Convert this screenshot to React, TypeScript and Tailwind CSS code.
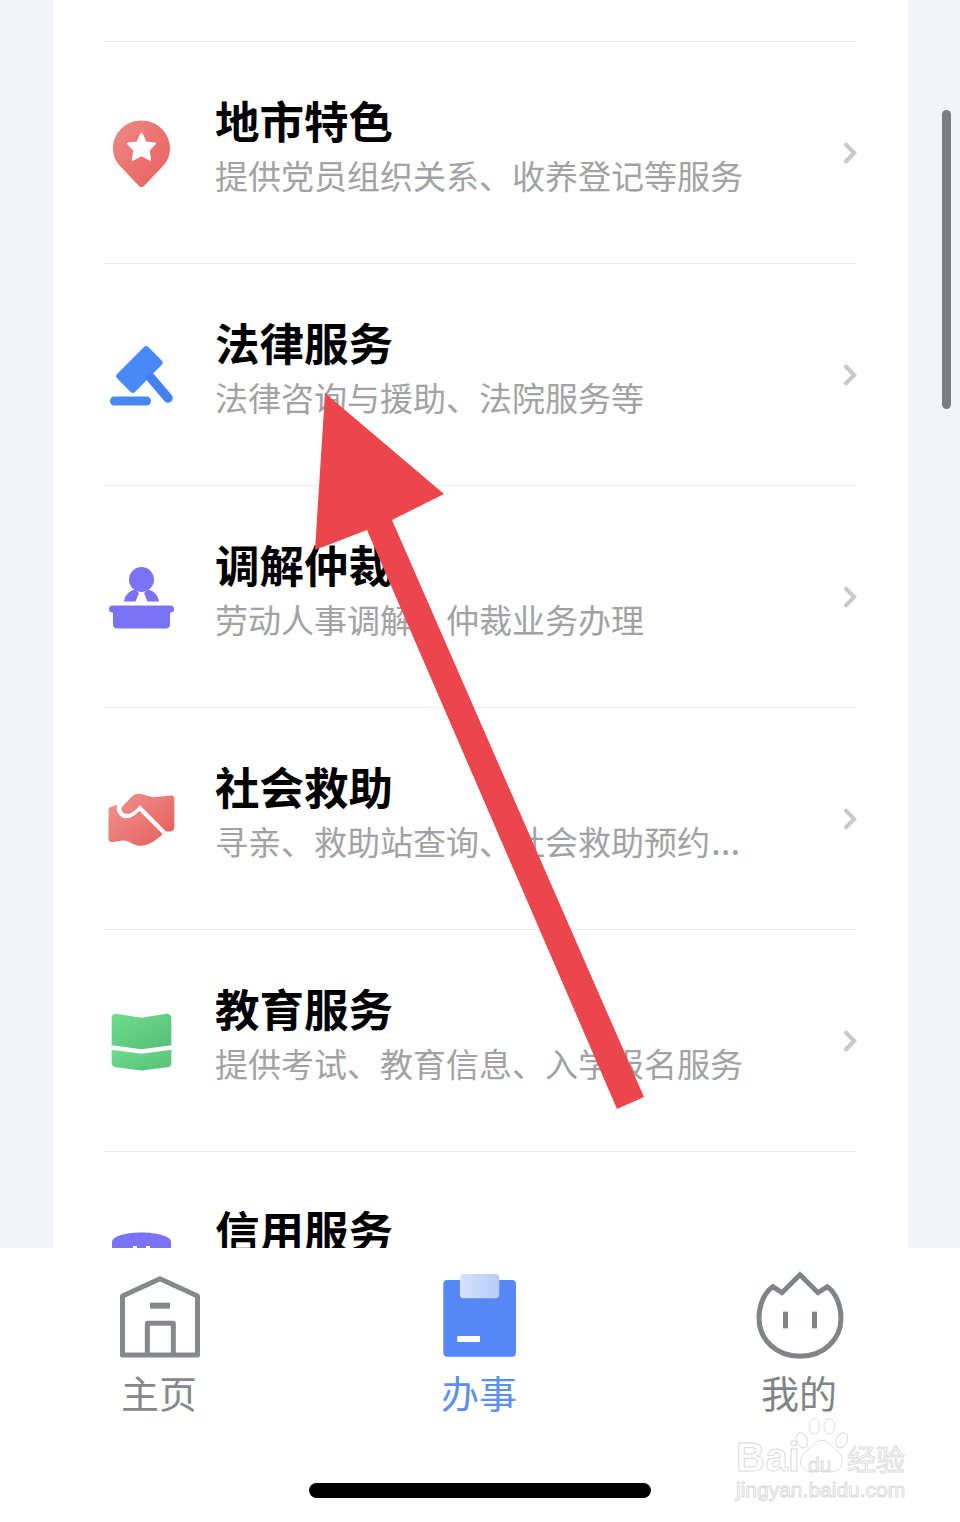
import React from "react";

const FONT = "font-['Noto_Sans','Noto_Sans_CJK_SC',sans-serif]";

function Pin() {
  return (
    <svg viewBox="0 0 70 70" className="w-[70px] h-[70px] shrink-0">
      <defs>
        <linearGradient id="pinG" x1="0" y1="0" x2="1" y2="1">
          <stop offset="0" stopColor="#ee8a87" />
          <stop offset="1" stopColor="#e85e5a" />
        </linearGradient>
      </defs>
      <path d="M35.5 2.5C51.5 2.5 64 15 64 30.5C64 38 61 44 56 49L38.5 67.5C36.8 69.5 34.2 69.5 32.5 67.5L15 49C10 44 7 38 7 30.5C7 15 19.5 2.5 35.5 2.5Z" fill="url(#pinG)" />
      <path d="M35.5 15.5L39.6 24.4L49 25.6L42.6 32.3L44.2 41.7L35.5 37.4L26.8 41.7L28.4 32.3L22 25.6L31.4 24.4Z" fill="#fff" stroke="#fff" strokeWidth="2" strokeLinejoin="round" />
    </svg>
  );
}

function Gavel() {
  return (
    <svg viewBox="0 0 70 70" className="w-[70px] h-[70px] shrink-0">
      <path d="M38 7C39.2 5.7 41 5.7 42.2 7L55.8 20.5C57.1 21.8 57.1 23.6 55.8 24.8L29 52C27.7 53.3 25.9 53.3 24.7 52L11 38.2C9.7 37 9.7 35.2 11 34Z" fill="#4689f7" />
      <path d="M45 38L62 58" stroke="#4280f4" strokeWidth="9.5" strokeLinecap="round" />
      <rect x="4" y="56.5" width="41" height="9" rx="4.5" fill="#4688f6" />
    </svg>
  );
}

function Person() {
  return (
    <svg viewBox="0 0 70 70" className="w-[70px] h-[70px] shrink-0">
      <circle cx="35.5" cy="17.5" r="12.5" fill="#7a73f5" />
      <path d="M18 39.5C19 33 23 29 29 27.5L33 31L29.5 39.5ZM53 39.5C52 33 48 29 42 27.5L38 31L41.5 39.5Z" fill="#7a73f5" />
      <rect x="3" y="43.5" width="65" height="7" rx="3.5" fill="#7a73f5" />
      <path d="M7 49H64V62.5C64 65 62.5 66.5 60 66.5H11C8.5 66.5 7 65 7 62.5Z" fill="#7a73f5" />
    </svg>
  );
}

function Hands() {
  return (
    <svg viewBox="0 0 70 70" className="w-[70px] h-[70px] shrink-0">
      <defs>
        <linearGradient id="hsG" x1="0" y1="0" x2="1" y2="1">
          <stop offset="0" stopColor="#ef8f8c" />
          <stop offset="1" stopColor="#e7625d" />
        </linearGradient>
      </defs>
      <g transform="translate(-16 -233.5) scale(.3333)" fill="url(#hsG)">
        <path d="M56 772L82 763C76 778 85 795 100 802C118 808 134 796 148 781L218 851C200 866 182 884 150 886C132 886 116 868 96 870L66 875C58 875 55 870 55 862Z" />
        <path d="M95 770L126 738C134 730 146 729 156 731L190 740L245 735C251 735 253 739 253 746V828C253 838 248 843 240 843H228L150 764C138 778 124 791 110 790C98 788 92 780 95 770Z" />
      </g>
    </svg>
  );
}

function Book() {
  return (
    <svg viewBox="0 0 70 70" className="w-[70px] h-[70px] shrink-0">
      <defs>
        <linearGradient id="bkG" x1="0" y1="0" x2="1" y2="1">
          <stop offset="0" stopColor="#6fdd8e" />
          <stop offset="1" stopColor="#55bd78" />
        </linearGradient>
      </defs>
      <g transform="translate(-16 -5.5) scale(.3333)" fill="url(#bkG)">
        <path d="M65 52C65 44 70 40 78 40L154 52L230 40C238 40 244 44 244 52V134L154 146L65 134Z" />
        <path d="M65 148L154 160L244 148V186C244 195 240 200 232 200L154 210L78 200C70 200 65 195 65 186Z" />
      </g>
    </svg>
  );
}

function Credit() {
  return (
    <svg viewBox="0 0 70 70" className="w-[70px] h-[70px] shrink-0">
      <path d="M6 14C6 8 20 4.5 35.5 4.5C51 4.5 65 8 65 14V66H6Z" fill="#7a73f5" />
      <rect x="27" y="18" width="4" height="6" fill="#fff" />
      <rect x="40" y="18" width="4" height="6" fill="#fff" />
    </svg>
  );
}

function Chevron() {
  return (
    <svg viewBox="0 0 14 22" className="w-[14px] h-[22px] shrink-0 ml-auto">
      <path d="M1.8 1.5L11.2 11L1.8 20.5" fill="none" stroke="#c9c9cd" strokeWidth="4" />
    </svg>
  );
}

const rows = [
  { t: "地市特色", s: "提供党员组织关系、收养登记等服务", e: false, I: Pin },
  { t: "法律服务", s: "法律咨询与援助、法院服务等", e: false, I: Gavel },
  { t: "调解仲裁", s: "劳动人事调解、仲裁业务办理", e: false, I: Person },
  { t: "社会救助", s: "寻亲、救助站查询、社会救助预约", e: true, I: Hands },
  { t: "教育服务", s: "提供考试、教育信息、入学报名服务", e: false, I: Book },
  { t: "信用服务", s: "", e: false, I: Credit },
];

function Row({ t, s, e, I }: { t: string; s: string; e: boolean; I: () => React.ReactElement }) {
  return (
    <div className="h-[222px] shrink-0 border-t border-[#ececee] flex items-center pl-[2px]">
      <I />
      <div className="ml-[39px] w-[540px] -mt-[11px]">
        <div className="text-[44.5px] leading-[60px] font-bold text-black whitespace-nowrap">{t}</div>
        <div className="text-[33px] h-[50px] leading-[50px] text-[#a2a2a4] whitespace-nowrap">
          {s}
          {e && <span className="text-[37px] ml-[1px] leading-[40px]">…</span>}
        </div>
      </div>
      <Chevron />
    </div>
  );
}

function NavHome() {
  return (
    <svg viewBox="0 0 90 90" className="w-[90px] h-[90px]">
      <g transform="translate(-15 -11) scale(.3333)" fill="none" stroke="#85898c" strokeWidth="15" strokeLinejoin="round">
        <path d="M67.5 108L180 56L292.5 108V285H67.5Z" />
        <path d="M142 284V190H220V284" />
        <path d="M150 137H210" strokeWidth="18" />
      </g>
    </svg>
  );
}

function NavWork() {
  return (
    <svg viewBox="0 0 90 90" className="w-[90px] h-[90px]">
      <defs>
        <linearGradient id="tabG" x1="0" y1="0" x2="1" y2="0">
          <stop offset="0" stopColor="#d6e2fb" />
          <stop offset="1" stopColor="#b5ccf8" />
        </linearGradient>
      </defs>
      <g transform="translate(-335 -11) scale(.3333)">
        <rect x="1030" y="60" width="218" height="230" rx="12" fill="#5588f5" />
        <rect x="1080" y="42" width="118" height="73" rx="12" fill="url(#tabG)" />
        <rect x="1072" y="228" width="68" height="18" fill="#fff" />
      </g>
    </svg>
  );
}

function NavMe() {
  return (
    <svg viewBox="0 0 90 90" className="w-[90px] h-[90px]">
      <g transform="translate(-55 -11) scale(.3333)">
        <path d="M218 80L246 98L300 44L354 98L382 80C410 100 423 140 423 175C423 240 370 289 300 289C230 289 177 240 177 175C177 140 190 100 218 80Z" fill="none" stroke="#7f8487" strokeWidth="15" strokeLinejoin="miter" />
        <rect x="249" y="155" width="15" height="50" fill="#7f8487" />
        <rect x="336" y="155" width="15" height="50" fill="#7f8487" />
      </g>
    </svg>
  );
}

function NavItem({ label, color, children }: { label: string; color: string; children: React.ReactNode }) {
  return (
    <div className="w-[320px] flex flex-col items-center">
      {children}
      <div className={`text-[38px] leading-[50px] mt-[7px] -translate-x-[1px] ${color}`}>{label}</div>
    </div>
  );
}

function Watermark() {
  const stroke = "[-webkit-text-stroke:1px_#dcdcdc] text-transparent font-['Liberation_Sans',sans-serif] whitespace-nowrap absolute";
  return (
    <div className="absolute left-[730px] top-[1415px] w-[190px] h-[90px]">
      <div className={`${stroke} left-[6px] top-[21px] text-[40px] leading-[42px] font-bold tracking-[0.5px]`}>Bai</div>
      <svg viewBox="0 0 70 70" className="absolute left-[62px] top-[3px] w-[58px] h-[58px]" fill="none" stroke="#dcdcdc" strokeWidth="1.2">
        <ellipse cx="12" cy="27" rx="6.5" ry="9.5" transform="rotate(-25 12 27)" />
        <ellipse cx="27" cy="10" rx="6.5" ry="9.5" />
        <ellipse cx="45" cy="10" rx="6.5" ry="9.5" />
        <ellipse cx="60" cy="27" rx="6.5" ry="9.5" transform="rotate(25 60 27)" />
        <path d="M36 27C44 27 48 34 56 41C65 50 60 66 47 65C41 64 32 64 25 65C10 66 6 51 15 42C24 35 28 27 36 27Z" />
      </svg>
      <div className={`${stroke} left-[78px] top-[38px] text-[21px] leading-[24px]`}>du</div>
      <div className={`${stroke} left-[117px] top-[26px] text-[29px] leading-[34px] font-['Noto_Sans_CJK_SC',sans-serif]`}>经验</div>
      <div className={`${stroke} left-[6px] top-[61px] text-[21px] leading-[28px]`}>jingyan.baidu.com</div>
    </div>
  );
}

export default function App() {
  return (
    <div className={`relative w-[960px] h-[1522px] overflow-hidden bg-white flex flex-col ${FONT}`}>
      <div className="h-[1248px] shrink-0 overflow-hidden bg-[#f2f4f9] pl-[53px]">
        <div className="w-[855px] h-[1248px] bg-white pl-[51px] pr-[51px] pt-[41px] flex flex-col">
          {rows.map((r) => (
            <Row key={r.t} {...r} />
          ))}
        </div>
      </div>

      <div className="flex-1 flex flex-col">
        <div className="flex pt-[23px]">
          <NavItem label="主页" color="text-[#85898c]"><NavHome /></NavItem>
          <NavItem label="办事" color="text-[#5b90ef]"><NavWork /></NavItem>
          <NavItem label="我的" color="text-[#7f8487]"><NavMe /></NavItem>
        </div>
        <div className="w-[342px] h-[15px] rounded-full bg-black mx-auto mt-[65px]" />
      </div>

      <div className="absolute left-[942px] top-[110px] w-[9px] h-[299px] rounded-full bg-[#7c7d80]" />

      <svg viewBox="0 0 960 1522" className="absolute left-0 top-0 w-[960px] h-[1522px] pointer-events-none">
        <path d="M325 393L444 494L392 520L644 1097L617 1109L367 530L315 550Z" fill="#ea464c" />
      </svg>

      <Watermark />
    </div>
  );
}
